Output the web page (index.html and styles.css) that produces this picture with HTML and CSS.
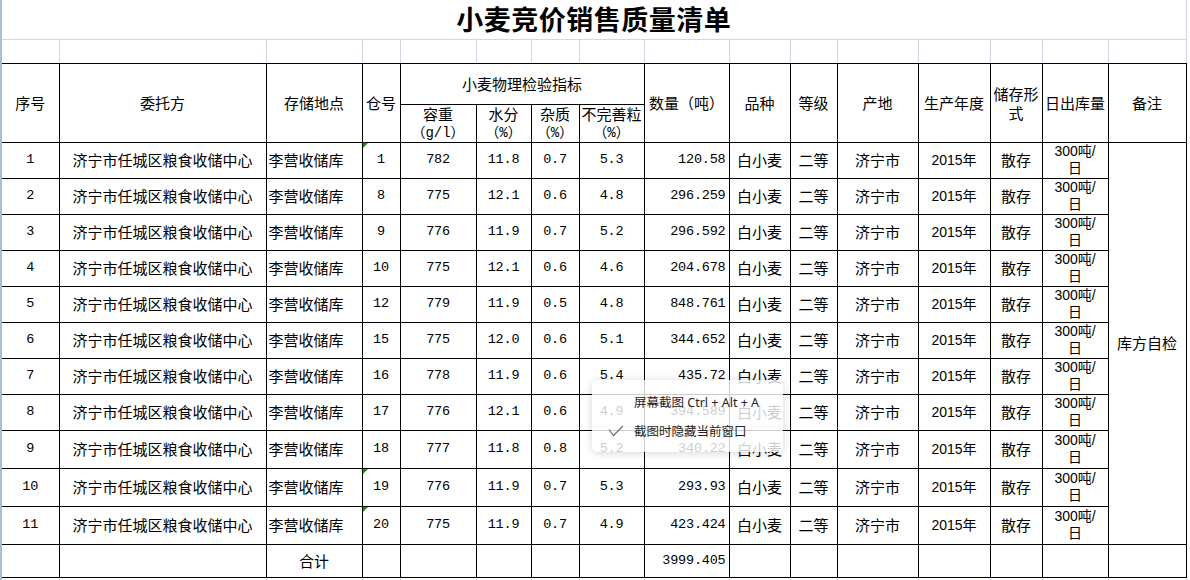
FILE: index.html
```html
<!DOCTYPE html>
<html lang="zh-CN">
<head>
<meta charset="utf-8">
<title>小麦竞价销售质量清单</title>
<link rel="stylesheet" href="styles.css">
</head>
<body>
<div class="sheet">
  <table class="grid">
    <colgroup>
      <col class="w1"><col class="w2"><col class="w3"><col class="w4"><col class="w5"><col class="w6"><col class="w7"><col class="w8">
      <col class="w9"><col class="w10"><col class="w11"><col class="w12"><col class="w13"><col class="w14"><col class="w15"><col class="w16">
    </colgroup>
    <tr class="r-title"><td class="title" colspan="16">小麦竞价销售质量清单</td></tr>
    <tr class="r-blank"><td></td><td></td><td></td><td></td><td></td><td></td><td></td><td></td><td></td><td></td><td></td><td></td><td></td><td></td><td></td><td></td></tr>
    <tr class="r-h1">
      <th rowspan="2">序号</th>
      <th rowspan="2">委托方</th>
      <th rowspan="2">存储地点</th>
      <th rowspan="2">仓号</th>
      <th colspan="4">小麦物理检验指标</th>
      <th rowspan="2">数量（吨）</th>
      <th rowspan="2">品种</th>
      <th rowspan="2">等级</th>
      <th rowspan="2">产地</th>
      <th rowspan="2">生产年度</th>
      <th rowspan="2" class="two18 tightpad">储存形<br>式</th>
      <th rowspan="2" class="tightpad">日出库量</th>
      <th rowspan="2">备注</th>
    </tr>
    <tr class="r-h2">
      <th class="two">容重<br><span class="mono">（g/l）</span></th>
      <th class="two">水分<br><span class="mono">（%）</span></th>
      <th class="two">杂质<br><span class="mono">（%）</span></th>
      <th class="two tightpad">不完善粒<br><span class="mono">（%）</span></th>
    </tr>
    <tr class="rd"><td class="num">1</td><td>济宁市任城区粮食收储中心</td><td class="left">李营收储库</td><td class="num mark">1</td><td class="num">782</td><td class="num">11.8</td><td class="num">0.7</td><td class="num">5.3</td><td class="num right">120.58</td><td>白小麦</td><td>二等</td><td>济宁市</td><td class="sans">2015年</td><td>散存</td><td class="sans two">300吨/<br>日</td><td rowspan="11">库方自检</td></tr>
    <tr class="rd"><td class="num">2</td><td>济宁市任城区粮食收储中心</td><td class="left">李营收储库</td><td class="num">8</td><td class="num">775</td><td class="num">12.1</td><td class="num">0.6</td><td class="num">4.8</td><td class="num right">296.259</td><td>白小麦</td><td>二等</td><td>济宁市</td><td class="sans">2015年</td><td>散存</td><td class="sans two">300吨/<br>日</td></tr>
    <tr class="rd"><td class="num">3</td><td>济宁市任城区粮食收储中心</td><td class="left">李营收储库</td><td class="num">9</td><td class="num">776</td><td class="num">11.9</td><td class="num">0.7</td><td class="num">5.2</td><td class="num right">296.592</td><td>白小麦</td><td>二等</td><td>济宁市</td><td class="sans">2015年</td><td>散存</td><td class="sans two">300吨/<br>日</td></tr>
    <tr class="rd"><td class="num">4</td><td>济宁市任城区粮食收储中心</td><td class="left">李营收储库</td><td class="num">10</td><td class="num">775</td><td class="num">12.1</td><td class="num">0.6</td><td class="num">4.6</td><td class="num right">204.678</td><td>白小麦</td><td>二等</td><td>济宁市</td><td class="sans">2015年</td><td>散存</td><td class="sans two">300吨/<br>日</td></tr>
    <tr class="rd"><td class="num">5</td><td>济宁市任城区粮食收储中心</td><td class="left">李营收储库</td><td class="num">12</td><td class="num">779</td><td class="num">11.9</td><td class="num">0.5</td><td class="num">4.8</td><td class="num right">848.761</td><td>白小麦</td><td>二等</td><td>济宁市</td><td class="sans">2015年</td><td>散存</td><td class="sans two">300吨/<br>日</td></tr>
    <tr class="rd"><td class="num">6</td><td>济宁市任城区粮食收储中心</td><td class="left">李营收储库</td><td class="num">15</td><td class="num">775</td><td class="num">12.0</td><td class="num">0.6</td><td class="num">5.1</td><td class="num right">344.652</td><td>白小麦</td><td>二等</td><td>济宁市</td><td class="sans">2015年</td><td>散存</td><td class="sans two">300吨/<br>日</td></tr>
    <tr class="rd"><td class="num">7</td><td>济宁市任城区粮食收储中心</td><td class="left">李营收储库</td><td class="num">16</td><td class="num">778</td><td class="num">11.9</td><td class="num">0.6</td><td class="num">5.4</td><td class="num right">435.72</td><td>白小麦</td><td>二等</td><td>济宁市</td><td class="sans">2015年</td><td>散存</td><td class="sans two">300吨/<br>日</td></tr>
    <tr class="rd"><td class="num">8</td><td>济宁市任城区粮食收储中心</td><td class="left">李营收储库</td><td class="num">17</td><td class="num">776</td><td class="num">12.1</td><td class="num">0.6</td><td class="num">4.9</td><td class="num right">394.589</td><td>白小麦</td><td>二等</td><td>济宁市</td><td class="sans">2015年</td><td>散存</td><td class="sans two">300吨/<br>日</td></tr>
    <tr class="rt"><td class="num">9</td><td>济宁市任城区粮食收储中心</td><td class="left">李营收储库</td><td class="num">18</td><td class="num">777</td><td class="num">11.8</td><td class="num">0.8</td><td class="num">5.2</td><td class="num right">340.22</td><td>白小麦</td><td>二等</td><td>济宁市</td><td class="sans">2015年</td><td>散存</td><td class="sans two">300吨/<br>日</td></tr>
    <tr class="rt"><td class="num">10</td><td>济宁市任城区粮食收储中心</td><td class="left">李营收储库</td><td class="num mark">19</td><td class="num">776</td><td class="num">11.9</td><td class="num">0.7</td><td class="num">5.3</td><td class="num right">293.93</td><td>白小麦</td><td>二等</td><td>济宁市</td><td class="sans">2015年</td><td>散存</td><td class="sans two">300吨/<br>日</td></tr>
    <tr class="rt"><td class="num">11</td><td>济宁市任城区粮食收储中心</td><td class="left">李营收储库</td><td class="num mark">20</td><td class="num">775</td><td class="num">11.9</td><td class="num">0.7</td><td class="num">4.9</td><td class="num right">423.424</td><td>白小麦</td><td>二等</td><td>济宁市</td><td class="sans">2015年</td><td>散存</td><td class="sans two">300吨/<br>日</td></tr>
    <tr class="rs"><td></td><td></td><td>合计</td><td></td><td></td><td></td><td></td><td></td><td class="num right">3999.405</td><td></td><td></td><td></td><td></td><td></td><td></td><td></td></tr>
    <tr class="r-tail"><td></td><td></td><td></td><td></td><td></td><td></td><td></td><td></td><td></td><td></td><td></td><td></td><td></td><td></td><td></td><td></td></tr>
  </table>

  <div class="menu">
    <div class="mi"><span class="ck"></span><span>屏幕截图 Ctrl + Alt + A</span></div>
    <div class="mi"><span class="ck"><svg width="16" height="12" viewBox="0 0 16 12"><polyline points="1,4.5 5.5,10.5 15,1" fill="none" stroke="#6b6b6b" stroke-width="1.2"/></svg></span><span>截图时隐藏当前窗口</span></div>
  </div>
</div>
</body>
</html>
```

FILE: styles.css
```css
html, body {
  margin: 0;
  padding: 0;
  background: #ffffff;
}

.sheet {
  position: relative;
  width: 1188px;
  height: 580px;
  border-left: 2px solid #a9bdd9;
  overflow: hidden;
  font-family: "Noto Sans CJK SC", "Liberation Sans", sans-serif;
  color: #000;
}

.grid {
  border-collapse: collapse;
  table-layout: fixed;
  width: 1184px;
}

.w1 { width: 57px; }
.w2 { width: 207px; }
.w3 { width: 96px; }
.w4 { width: 38px; }
.w5 { width: 76px; }
.w6 { width: 55px; }
.w7 { width: 48px; }
.w8 { width: 65px; }
.w9 { width: 85px; }
.w10 { width: 61px; }
.w11 { width: 47px; }
.w12 { width: 81px; }
.w13 { width: 72px; }
.w14 { width: 52px; }
.w15 { width: 66px; }
.w16 { width: 78px; }

.grid td,
.grid th {
  border: 1px solid #000;
  padding: 0 3px;
  font-size: 15px;
  font-weight: normal;
  text-align: center;
  vertical-align: middle;
  white-space: nowrap;
  overflow: hidden;
  line-height: 18px;
}

.grid tr > :first-child { border-left: none; }
.grid .tightpad { padding: 0; }

/* title row */
.r-title { height: 39px; }
.grid .title {
  border: none;
  border-right: 1px solid #d0d7e5;
  border-bottom: 1px solid #d0d7e5;
  font-size: 27px;
  font-weight: 700;
  line-height: 38px;
  letter-spacing: 0.5px;
  vertical-align: middle;
  overflow: visible;
  padding: 0;
}

/* blank grid row */
.r-blank { height: 24px; }
.r-blank td {
  border-top: 1px solid #d0d7e5;
  border-left: 1px solid #d0d7e5;
  border-right: 1px solid #d0d7e5;
  border-bottom: 1px solid #000;
}

.r-h1 { height: 41px; }
.r-h2 { height: 36px; }
.grid .two { line-height: 17px; }
.grid .two18 { line-height: 19px; }

.rd { height: 36px; }
.rt { height: 38px; }
.rs { height: 33px; }

.r-tail { height: 20px; }
.r-tail td {
  border-left: 1px solid #d0d7e5;
  border-right: 1px solid #d0d7e5;
  border-bottom: none;
}

.grid .num {
  font-family: "Liberation Mono", "DejaVu Sans Mono", monospace;
  font-size: 13.5px;
  letter-spacing: -0.2px;
}
.mono {
  font-family: "Liberation Mono", "Noto Sans CJK SC", monospace;
  font-size: 14px;
}
.grid .sans {
  font-family: "Liberation Sans", "Noto Sans CJK SC", sans-serif;
  font-size: 14px;
}
.grid .left { text-align: left; padding-left: 2px; }
.grid .right { text-align: right; padding-right: 3px; }

.grid .mark { position: relative; }
.grid .mark::before {
  content: "";
  position: absolute;
  left: 0;
  top: 0;
  border-top: 5px solid #1e8c1e;
  border-right: 5px solid transparent;
}

/* screenshot context menu */
.menu {
  position: absolute;
  left: 590px;
  top: 380px;
  width: 191px;
  height: 72px;
  box-sizing: border-box;
  padding-top: 7px;
  background: rgba(255, 255, 255, 0.8);
  border-radius: 6px;
  box-shadow: 0 1px 8px rgba(0, 0, 0, 0.16);
  font-family: "Noto Sans", "Noto Sans CJK SC", sans-serif;
  font-size: 12.5px;
  color: #222;
}
.mi {
  display: flex;
  align-items: center;
  height: 29px;
  padding-left: 16px;
}
.ck {
  display: flex;
  align-items: center;
  width: 26px;
  height: 14px;
}
```
